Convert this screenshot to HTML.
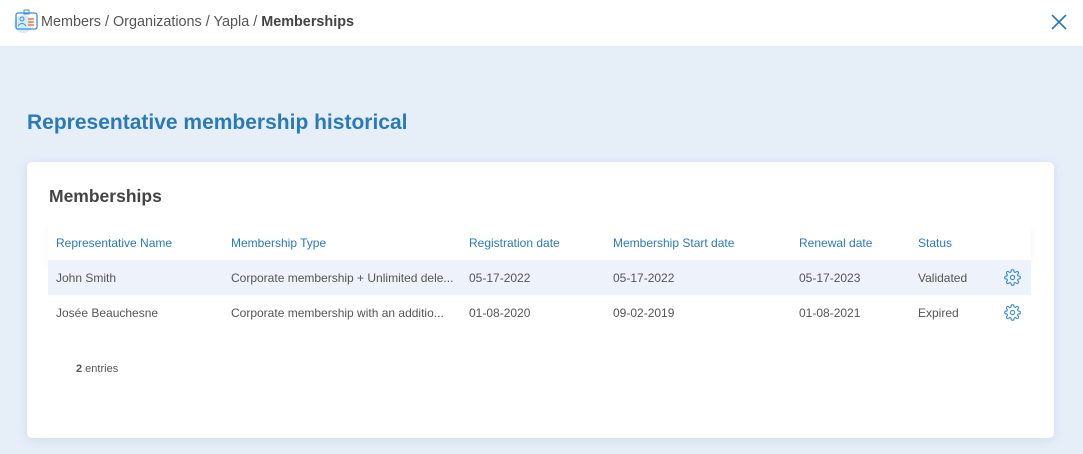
<!DOCTYPE html>
<html><head><meta charset="utf-8"><style>
*{margin:0;padding:0;box-sizing:border-box}
body{width:1083px;height:454px;overflow:hidden;font-family:"Liberation Sans",sans-serif;background:#e6eef8;position:relative}
.top{height:46px;background:#fff;position:relative}
.bc{position:absolute;left:41px;top:14px;font-size:14.4px;color:#555}
.bc b{color:#444}
.close{position:absolute;right:14px;top:12px}
h1{position:absolute;left:27px;top:111px;font-size:21px;color:#2a7ab8;font-weight:bold}
.card{position:absolute;left:27px;top:162px;width:1027px;height:276px;background:#fff;border-radius:5px;box-shadow:0 2px 10px rgba(120,150,200,.2)}
.card h2{position:absolute;left:22px;top:24px;font-size:17.5px;color:#444;font-weight:bold}
.row{position:absolute;left:21px;width:983px;height:35px;font-size:12px;color:#555}
.row span{position:absolute;top:11px;white-space:nowrap}
.hd{top:63px;color:#2a7ab8;background:#fff;box-shadow:0 4px 6px rgba(120,150,200,.12)}
.r1{top:98px;background:#edf2fb}
.r2{top:133px}
.gear{position:absolute;left:956px;top:9px}
.ent{position:absolute;left:49px;top:201px;font-size:11px;color:#555}
</style></head><body>
<div class="top">
<svg style="position:absolute;left:12px;top:8px" width="28" height="28"><circle cx="11" cy="16" r="9" fill="#d7ecfa"/><rect x="4" y="5" width="21" height="16" rx="2" fill="none" stroke="#3d8fd0" stroke-width="1.3"/><rect x="12" y="2" width="5" height="4" fill="none" stroke="#3d8fd0"/><circle cx="10" cy="11" r="2" fill="none" stroke="#3d8fd0"/><path d="M6 18q4-5 8 0" fill="none" stroke="#3d8fd0"/><path d="M16 11h6M16 14h6M16 17h6" stroke="#f07a3a" stroke-width="1.5"/></svg>
<div class="bc">Members / Organizations / Yapla / <b>Memberships</b></div>
<svg class="close" width="20" height="20"><path d="M3 3L17 17M17 3L3 17" stroke="#2a7ab8" stroke-width="1.6"/></svg>
</div>
<h1>Representative membership historical</h1>
<div class="card">
<h2>Memberships</h2>
<div class="row hd"><span style="left:8px">Representative Name</span><span style="left:183px">Membership Type</span><span style="left:421px">Registration date</span><span style="left:565px">Membership Start date</span><span style="left:751px">Renewal date</span><span style="left:870px">Status</span></div>
<div class="row r1"><span style="left:8px">John Smith</span><span style="left:183px">Corporate membership + Unlimited dele...</span><span style="left:421px">05-17-2022</span><span style="left:565px">05-17-2022</span><span style="left:751px">05-17-2023</span><span style="left:870px">Validated</span>
<svg class="gear" width="17" height="17" viewBox="0 0 24 24" fill="none" stroke="#3d8fd0" stroke-width="1.6"><circle cx="12" cy="12" r="3"/><path d="M19.4 15a1.7 1.7 0 0 0 .3 1.8l.1.1a2 2 0 1 1-2.8 2.8l-.1-.1a1.7 1.7 0 0 0-1.8-.3 1.7 1.7 0 0 0-1 1.5V21a2 2 0 1 1-4 0v-.1a1.7 1.7 0 0 0-1.1-1.5 1.7 1.7 0 0 0-1.8.3l-.1.1a2 2 0 1 1-2.8-2.8l.1-.1a1.7 1.7 0 0 0 .3-1.8 1.7 1.7 0 0 0-1.5-1H3a2 2 0 1 1 0-4h.1a1.7 1.7 0 0 0 1.5-1.1 1.7 1.7 0 0 0-.3-1.8l-.1-.1a2 2 0 1 1 2.8-2.8l.1.1a1.7 1.7 0 0 0 1.8.3H9a1.7 1.7 0 0 0 1-1.5V3a2 2 0 1 1 4 0v.1a1.7 1.7 0 0 0 1 1.5 1.7 1.7 0 0 0 1.8-.3l.1-.1a2 2 0 1 1 2.8 2.8l-.1.1a1.7 1.7 0 0 0-.3 1.8V9a1.7 1.7 0 0 0 1.5 1H21a2 2 0 1 1 0 4h-.1a1.7 1.7 0 0 0-1.5 1z"/></svg></div>
<div class="row r2"><span style="left:8px">Josée Beauchesne</span><span style="left:183px">Corporate membership with an additio...</span><span style="left:421px">01-08-2020</span><span style="left:565px">09-02-2019</span><span style="left:751px">01-08-2021</span><span style="left:870px">Expired</span>
<svg class="gear" width="17" height="17" viewBox="0 0 24 24" fill="none" stroke="#3d8fd0" stroke-width="1.6"><circle cx="12" cy="12" r="3"/><path d="M19.4 15a1.7 1.7 0 0 0 .3 1.8l.1.1a2 2 0 1 1-2.8 2.8l-.1-.1a1.7 1.7 0 0 0-1.8-.3 1.7 1.7 0 0 0-1 1.5V21a2 2 0 1 1-4 0v-.1a1.7 1.7 0 0 0-1.1-1.5 1.7 1.7 0 0 0-1.8.3l-.1.1a2 2 0 1 1-2.8-2.8l.1-.1a1.7 1.7 0 0 0 .3-1.8 1.7 1.7 0 0 0-1.5-1H3a2 2 0 1 1 0-4h.1a1.7 1.7 0 0 0 1.5-1.1 1.7 1.7 0 0 0-.3-1.8l-.1-.1a2 2 0 1 1 2.8-2.8l.1.1a1.7 1.7 0 0 0 1.8.3H9a1.7 1.7 0 0 0 1-1.5V3a2 2 0 1 1 4 0v.1a1.7 1.7 0 0 0 1 1.5 1.7 1.7 0 0 0 1.8-.3l.1-.1a2 2 0 1 1 2.8 2.8l-.1.1a1.7 1.7 0 0 0-.3 1.8V9a1.7 1.7 0 0 0 1.5 1H21a2 2 0 1 1 0 4h-.1a1.7 1.7 0 0 0-1.5 1z"/></svg></div>
<div class="ent"><b>2</b> entries</div>
</div>
</body></html>
